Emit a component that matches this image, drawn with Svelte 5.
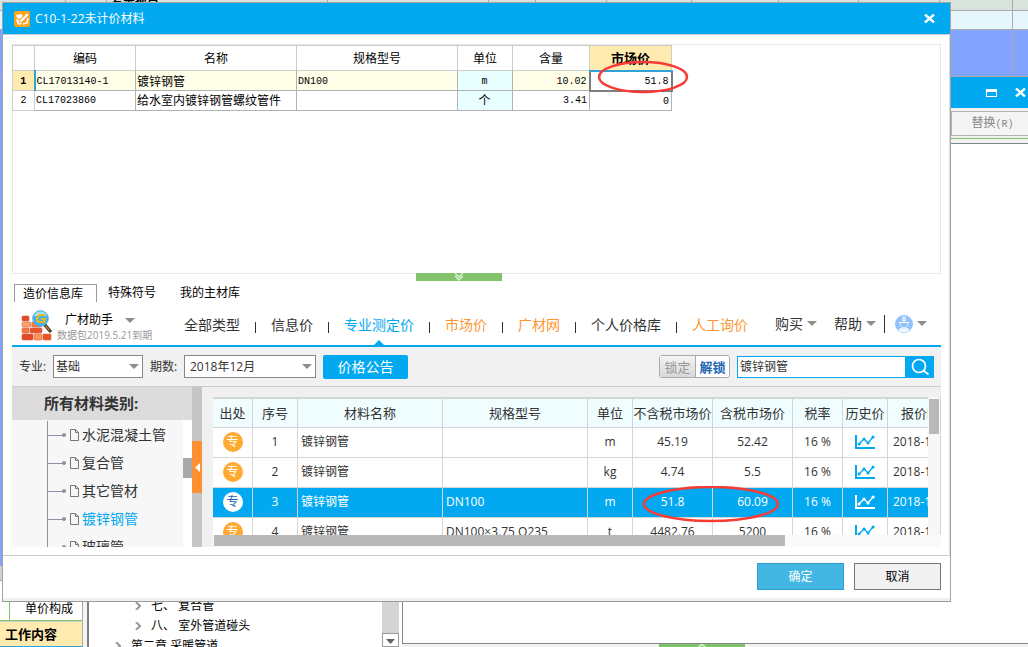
<script>
    let materials = [
        { code: 'CL17013140-1', name: '镀锌钢管', spec: 'DN100', unit: 'm', amount: '10.02', price: '51.8' },
        { code: 'CL17023860', name: '给水室内镀锌钢管螺纹管件', spec: '', unit: '个', amount: '3.41', price: '0' },
    ];

    let prices = [
        { name: '镀锌钢管', spec: '', unit: 'm', net: '45.19', gross: '52.42' },
        { name: '镀锌钢管', spec: '', unit: 'kg', net: '4.74', gross: '5.5' },
        { name: '镀锌钢管', spec: 'DN100', unit: 'm', net: '51.8', gross: '60.09' },
        { name: '镀锌钢管', spec: 'DN100×3.75 Q235', unit: 't', net: '4482.76', gross: '5200' },
    ];

    const navItems = [
        { label: '全部类型' },
        { label: '信息价' },
        { label: '专业测定价', active: true },
        { label: '市场价', hot: true },
        { label: '广材网', hot: true },
        { label: '个人价格库' },
        { label: '人工询价', hot: true },
    ];

    const categories = ['水泥混凝土管', '复合管', '其它管材', '镀锌钢管', '玻璃管'];
    const sheetColumns = [161, 47, 71, 85, 87, 80, 81, 73, 16];

    let selected = 2;
    let category = '镀锌钢管';
    let keyword = '镀锌钢管';
</script>

<div class="desktop">
    <div class="sheet">
        <div class="sheet-head">
            <i class="sheet-no"></i>
            <span>复杂项目</span>
            {#each sheetColumns as width}
                <i style="width: {width}px"></i>
            {/each}
        </div>
        <div class="sheet-row light"><i></i></div>
        <div class="sheet-row blue"><i></i></div>
    </div>
    <div class="left-pane">
        <div class="strip"></div>
        <div class="strip-end"></div>
        <div class="bottom-pane">
            <div class="cost">
                <div class="cost-tab">单价构成</div>
                <div class="cost-title">工作内容</div>
            </div>
            <ul class="chapters">
                <li><svg width="6" height="8" viewBox="0 0 6 8"><path d="M1 0l4 4-4 4" /></svg>七、 复合管</li>
                <li><svg width="6" height="8" viewBox="0 0 6 8"><path d="M1 0l4 4-4 4" /></svg>八、 室外管道碰头</li>
                <li class="outer"><svg width="6" height="8" viewBox="0 0 6 8"><path d="M1 0l4 4-4 4" /></svg>第二章 采暖管道</li>
            </ul>
            <div class="chapter-scroll">
                <button aria-label="向下"><svg width="9" height="5" viewBox="0 0 9 5"><path d="M0 0h9L4.500 5z" fill="#5b6270" /></svg></button>
            </div>
        </div>
    </div>
    <div class="back-window">
        <div class="back-title">
            <button aria-label="最大化"><svg width="11" height="8" viewBox="0 0 11 8"><path d="M0 0h11v8H0zM1 3v4h9V3z" fill="#fff" fill-rule="evenodd" /></svg></button>
            <button aria-label="关闭窗口"><svg width="11" height="9" viewBox="0 0 11 9"><path d="M1 .5l9 8M10 .5l-9 8" stroke="#fff" stroke-width="2.400" /></svg></button>
        </div>
        <div class="back-tools"><button disabled>替换<span class="mono">(R)</span></button></div>
        <div class="back-body"></div>
        <div class="back-foot"><div><svg width="10" height="4" viewBox="0 0 10 4"><path d="M1 4l4-4 4 4" stroke="#d9efd2" stroke-width="1.500" fill="none" /></svg></div></div>
    </div>

    <section class="dialog" role="dialog" aria-labelledby="dialog-title">
        <header class="title-bar">
            <svg width="16" height="16" viewBox="0 0 16 16">
                <rect width="16" height="16" rx="2" fill="#ffa21c" />
                <path d="M2 4l5-1 2 2-3 3-3-1zM2 8l3 1 1 2 1-1 1 3-3 1-2-2z" fill="#fff" />
                <path d="M6 9l7-7 2 2-7 7-3 1z" fill="#fff" stroke="#f29a20" stroke-width=".7" />
                <path d="M9 13l4-1 1-5" fill="none" stroke="#fff" stroke-width="1.500" />
            </svg>
            <h1 id="dialog-title">C10-1-22未计价材料</h1>
            <button class="close" aria-label="关闭"><svg width="11" height="9" viewBox="0 0 11 9"><path d="M1 .5l9 8M10 .5l-9 8" stroke="#fff" stroke-width="2.400" /></svg></button>
        </header>

        <div class="content">
            <div class="material-panel">
                <table class="materials">
                    <colgroup><col class="m-no" /><col class="m-code" /><col class="m-wide" /><col class="m-wide" /><col class="m-unit" /><col class="m-amount" /><col class="m-price" /></colgroup>
                    <thead>
                        <tr><th></th><th>编码</th><th>名称</th><th>规格型号</th><th>单位</th><th>含量</th><th class="focus">市场价</th></tr>
                    </thead>
                    <tbody>
                        {#each materials as item, i}
                            <tr class:current={i === 0}>
                                <th class="mono">{i + 1}</th>
                                <td class="mono">{item.code}</td>
                                <td>{item.name}</td>
                                <td class="mono">{item.spec}</td>
                                <td class="unit" class:mono={i === 0}>{item.unit}</td>
                                <td class="mono num">{item.amount}</td>
                                <td class="mono num price">
                                    {item.price}
                                    {#if i === 0}
                                        <svg class="ring small" width="92" height="34" viewBox="0 0 92 34"><ellipse cx="46" cy="17" rx="44" ry="15" /></svg>
                                    {/if}
                                </td>
                            </tr>
                        {/each}
                    </tbody>
                </table>
            </div>
            <button class="grip" aria-label="收起">
                <svg width="10" height="8" viewBox="0 0 10 8"><path d="M1 0l4 4 4-4M1 3l4 4 4-4" stroke="#e4f4df" stroke-width="1.300" fill="none" /></svg>
            </button>

            <div class="tabs">
                <button class="on">造价信息库</button>
                <button>特殊符号</button>
                <button>我的主材库</button>
            </div>

            <div class="helper">
                <svg class="logo" width="31" height="31" viewBox="0 0 31 31">
                    <g fill="#f17a45" stroke="#d9603c" stroke-width=".6">
                        <rect x="1" y="6" width="7" height="5" rx="1" fill="#e34a25" />
                        <rect x="1" y="12" width="9" height="5" rx="1" fill="#ffa36b" /><rect x="11" y="12" width="9" height="5" rx="1" />
                        <rect x="1" y="18" width="7" height="5" rx="1" /><rect x="9" y="18" width="12" height="5" rx="1" fill="#e9552b" />
                        <rect x="1" y="24" width="11" height="6" rx="1" fill="#e34a25" /><rect x="13" y="24" width="8" height="6" rx="1" fill="#ff965c" /><rect x="22" y="24" width="8" height="6" rx="1" fill="#ea5527" />
                    </g>
                    <path d="M24 15l5 6" stroke="#5d4527" stroke-width="3.500" stroke-linecap="round" />
                    <path d="M25 16l3 4" stroke="#d4a34b" stroke-width="1" />
                    <circle cx="19.500" cy="8.500" r="7.800" fill="#42b3ed" stroke="#5aa9d6" />
                    <path d="M13 6a7 7 0 0 1 13 0" fill="#a5e2ff" />
                    <path d="M24 5h-5q-3 1-3 4 0 3 3 3h4l1-3h-4" fill="none" stroke="#e8b81c" stroke-width="2" />
                </svg>
                <div class="product">
                    <button>广材助手 <i class="caret"></i></button>
                    <small>数据包2019.5.21到期</small>
                </div>
                <nav>
                    {#each navItems as item, i}
                        {#if i}<i class="sep"></i>{/if}
                        <a href="#{i}" class:active={item.active} class:hot={item.hot}>{item.label}</a>
                    {/each}
                </nav>
                <div class="account">
                    <button>购买 <i class="caret"></i></button>
                    <button>帮助 <i class="caret"></i></button>
                    <i class="divider"></i>
                    <button class="user" aria-label="账户">
                        <svg width="18" height="18" viewBox="0 0 18 18">
                            <circle cx="9" cy="9" r="9" fill="#8fc3fa" />
                            <path d="M3 15q1-2 4-2v-1h4v1q3 0 4 2-6 5-12 0z" fill="#eef6ff" />
                            <path d="M4 7.500h10M8 1.500v4h2v-4" stroke="#fff" stroke-width="1.200" fill="none" />
                            <path d="M5 8q0 5 4 5t4-5" fill="none" stroke="#d9ebff" />
                        </svg>
                        <i class="caret"></i>
                    </button>
                </div>
            </div>

            <div class="filters">
                <label for="major">专业:</label>
                <span class="select major"><select id="major"><option>基础</option></select><i class="caret"></i></span>
                <label for="period">期数:</label>
                <span class="select period"><select id="period"><option>2018年12月</option></select><i class="caret"></i></span>
                <button class="notice">价格公告</button>
                <div class="lock"><button disabled>锁定</button><button>解锁</button></div>
                <form class="search" on:submit|preventDefault>
                    <input aria-label="搜索材料" bind:value={keyword} />
                    <button aria-label="搜索"><svg width="20" height="18" viewBox="0 0 20 18"><circle cx="9" cy="8" r="6.500" fill="none" stroke="#fff" stroke-width="1.700" /><path d="M13.500 12.500l5 4" stroke="#fff" stroke-width="1.700" /></svg></button>
                </form>
            </div>

            <div class="workspace">
                <aside>
                    <h2>所有材料类别:</h2>
                    <div class="tree-box">
                        <ul class="tree">
                            {#each categories as item}
                                <li>
                                    <i class="branch"></i>
                                    <button class:picked={item === category} on:click={() => category = item}>
                                        <svg width="9" height="12" viewBox="0 0 9 12"><path d="M.5.5h5l3 3v8h-8zM5.500.5v3h3" fill="none" stroke="#777" /></svg>{item}
                                    </button>
                                </li>
                            {/each}
                        </ul>
                        <div class="tree-scroll"><i></i></div>
                    </div>
                </aside>
                <div class="splitter"><button aria-label="收起类别"><svg width="5" height="9" viewBox="0 0 5 9"><path d="M5 0v9L0 4.500z" fill="#fff" /></svg></button></div>
                <div class="grid">
                    <div class="grid-view">
                        <table class="prices">
                            <colgroup><col class="p-src" /><col class="p-no" /><col class="p-wide" /><col class="p-wide" /><col class="p-no" /><col class="p-price" /><col class="p-price" /><col class="p-tax" /><col class="p-no" /><col class="p-date" /></colgroup>
                            <thead>
                                <tr><th>出处</th><th>序号</th><th>材料名称</th><th>规格型号</th><th>单位</th><th>不含税市场价</th><th>含税市场价</th><th>税率</th><th>历史价</th><th>报价时间</th></tr>
                            </thead>
                            <tbody>
                                {#each prices as row, i}
                                    <tr class:selected={i === selected} on:click={() => selected = i}>
                                        <td><span class="badge">专</span></td>
                                        <td>{i + 1}</td>
                                        <td class="text">{row.name}</td>
                                        <td class="text">{row.spec}</td>
                                        <td>{row.unit}</td>
                                        <td class="net">
                                            {row.net}
                                            {#if i === 2}
                                                <svg class="ring large" width="137" height="37" viewBox="0 0 137 37"><ellipse cx="68" cy="18" rx="67" ry="17" /></svg>
                                            {/if}
                                        </td>
                                        <td>{row.gross}</td>
                                        <td>16 %</td>
                                        <td><svg class="chart" width="20" height="15" viewBox="0 0 20 15"><path d="M1 0v13h19" stroke-width="2" /><path d="M4 9l5-5 4 4 5-6" stroke-width="1.300" /><path d="M4 9h.1M9 4h.1M13 8h.1M18 2h.1" stroke-width="3" stroke-linecap="round" /></svg></td>
                                        <td>2018-12-05</td>
                                    </tr>
                                {/each}
                            </tbody>
                        </table>
                    </div>
                    <div class="v-scroll"><i></i></div>
                    <div class="h-scroll"><i></i></div>
                </div>
            </div>
        </div>

        <footer>
            <button class="ok">确定</button>
            <button class="cancel">取消</button>
        </footer>
    </section>
</div>

<style>
    * {
        box-sizing: border-box;
    }

    .desktop {
        position: relative;
        display: grid;
        grid-template-columns: 402px 1fr;
        grid-template-rows: 77px 1fr;
        height: 100vh;
        overflow: hidden;
        background: #fff;
        color: #000;
        font: 12px/16px "Liberation Sans", "Noto Sans CJK SC", sans-serif;
    }
    button, input, select {
        margin: 0;
        padding: 0;
        border: 0;
        border-radius: 0;
        background: none;
        color: inherit;
        font: inherit;
    }
    button {
        cursor: pointer;
    }
    ul, h1, h2 {
        margin: 0;
        padding: 0;
        list-style: none;
    }
    svg {
        flex: none;
    }
    a {
        color: inherit;
        text-decoration: none;
    }
    .mono {
        font-family: "Liberation Mono", "Noto Sans CJK SC", monospace;
        font-size: 10px;
    }
    .caret {
        flex: none;
        border: 5px solid transparent;
        border-top-color: #8d8d8d;
        border-bottom: 0;
    }

    /* windows behind the dialog */
    .sheet {
        grid-column: 1 / 3;
        display: flex;
        flex-direction: column;
    }
    .sheet-head, .sheet-row {
        display: flex;
        justify-content: flex-end;
        border-bottom: 1px solid #aaa;
    }
    .sheet-head {
        height: 11px;
        background: #d9e3de;
        font-size: 12px;
        font-weight: bold;
        line-height: 1px;
    }
    .sheet-head span {
        flex: 1;
        padding-left: 4px;
        border-left: 1px solid #aaa;
        line-height: 0;
    }
    .sheet i {
        width: 16px;
        border-left: 1px solid #aaa;
    }
    .sheet .sheet-no {
        width: 41px;
        margin-left: 65px;
    }
    .light {
        height: 19px;
        background: #e5f7fc;
    }
    .blue {
        flex: 1;
        background: #82a4fe;
    }
    .left-pane {
        display: flex;
        flex-direction: column;
    }
    .strip {
        flex: 1;
        background: #82a4fe;
    }
    .strip-end {
        height: 14px;
        background: #d0d0d0;
    }
    .bottom-pane {
        display: flex;
        height: 67px;
        overflow: hidden;
    }
    .cost {
        width: 89px;
        border-right: 2px solid #807e84;
        background: #f4f4f4;
    }
    .cost > div {
        width: 83px;
        border-right: 1px solid #aaa;
    }
    .cost-tab {
        height: 41px;
        padding: 20px 0 0 25px;
        border-top: 1px solid #80c36b;
        border-bottom: 1px solid #80c36b;
        background: linear-gradient(#80c36b, #80c36b) 9px 0 / 1px 100% no-repeat #fff;
    }
    .cost-title {
        height: 26px;
        padding: 5px;
        border-top: 1px solid #ccc;
        border-bottom: 1px solid #32a2d5;
        background: #ffebb0;
        font-size: 13px;
        font-weight: bold;
    }
    .chapters {
        flex: 1;
        padding-top: 16px;
    }
    .chapters li {
        display: flex;
        align-items: center;
        gap: 10px;
        height: 20px;
        padding-left: 46px;
        white-space: pre;
    }
    .chapters .outer {
        padding-left: 26px;
    }
    .chapters path {
        fill: none;
        stroke: #999;
        stroke-width: 2;
    }
    .chapter-scroll {
        display: flex;
        align-items: flex-end;
        width: 17px;
        margin-right: 3px;
        background: #d4d4d4;
    }
    .chapter-scroll button {
        width: 17px;
        height: 14px;
        border: 1px solid #999;
        background: #fff;
        line-height: 10px;
    }
    .back-window {
        display: flex;
        flex-direction: column;
        background: #f2f2f2;
    }
    .back-title {
        display: flex;
        align-items: center;
        justify-content: flex-end;
        gap: 18px;
        height: 31px;
        padding-right: 2px;
        background: #02a9f1;
    }
    .back-title button, .close {
        display: flex;
    }
    .back-tools {
        display: flex;
        justify-content: flex-end;
        height: 31px;
        padding-top: 3px;
        border-bottom: 1px solid #80c36b;
    }
    .back-tools button {
        width: 77px;
        height: 25px;
        padding-left: 5px;
        border: 1px solid #b3b3b3;
        border-right: 0;
        background: #f4f4f4;
        color: #888;
    }
    .back-body {
        flex: 1;
        margin-top: 4px;
        border: 1px solid #7f8790;
        border-right: 0;
        background: #fff;
    }
    .back-foot {
        height: 3px;
        padding-left: 257px;
    }
    .back-foot div {
        display: flex;
        justify-content: center;
        width: 86px;
        height: 3px;
        background: #80c36b;
    }

    .dialog {
        position: absolute;
        top: 2px;
        left: 2px;
        right: 77px;
        border: 1px solid #a3a3a3;
        border-bottom-color: #999;
        background: #fff;
    }
    .title-bar {
        display: flex;
        align-items: center;
        height: 32px;
        padding: 0 15px 0 11px;
        border-bottom: 1px solid #ccc;
        background: #02a9f1;
        color: #fff;
    }
    h1 {
        flex: 1;
        margin-left: 5px;
        font: 12px/16px "Open Sans", "Noto Sans CJK SC", sans-serif;
    }
    .content {
        padding: 9px 8px 8px 9px;
        border-right: 1px solid #ddd;
        border-bottom: 1px solid #ccc;
    }
    .material-panel {
        height: 230px;
        border: 1px solid #e8e8e8;
    }

    table {
        margin-left: -1px;
        border-collapse: collapse;
        table-layout: fixed;
    }
    .materials {
        width: 660px;
    }
    .m-no { width: 22px; }
    .m-code { width: 101px; }
    .m-wide { width: 161px; }
    .m-unit { width: 55px; }
    .m-amount { width: 77px; }
    .m-price { width: 82px; }
    .materials th, .materials td {
        height: 19px;
        padding: 2px 2px 0;
        border: 1px solid #b2b2b2;
        line-height: 16px;
        text-align: left;
        white-space: nowrap;
    }
    .materials td {
        padding-left: 1px;
    }
    .materials th {
        border-color: #ccc;
        font-weight: normal;
        text-align: center;
    }
    .materials thead th {
        height: 25px;
    }
    .materials .focus {
        border-bottom: 2px solid #32a2d5;
        background: #ffebb0;
        font-size: 13px;
        font-weight: bold;
    }
    .materials .current td {
        background: #ffffe9;
    }
    .materials .current th {
        border-right: 2px solid #32a2d5;
        background: #ffebb0;
        font-weight: bold;
    }
    .materials tbody .unit {
        background: #e9fefe;
        text-align: center;
    }
    .materials .num {
        text-align: right;
    }
    .materials .price {
        position: relative;
    }
    .materials .current .price {
        border: 2px solid #7d7d7d;
        border-top: 0;
        background: #fff;
    }
    .ring {
        position: absolute;
        z-index: 1;
        fill: none;
        stroke: #f93a35;
        stroke-width: 2.500;
        pointer-events: none;
    }
    .small {
        top: -12px;
        left: 6px;
    }
    .large {
        top: -2px;
        left: 10px;
    }
    .grip {
        display: flex;
        justify-content: center;
        width: 86px;
        height: 8px;
        margin: -1px 0 0 404px;
        background: #80c36b;
    }

    .tabs {
        display: flex;
        height: 18px;
        margin-top: 3px;
        padding-left: 2px;
    }
    .tabs button {
        height: 18px;
        margin-right: 14px;
        padding: 0 5px;
    }
    .tabs .on {
        margin-right: 6px;
        padding: 0 13px 0 8px;
        border: 1px solid #999;
        border-bottom: 0;
    }

    .helper, .filters, .workspace {
        color: #333;
        font-family: "Open Sans", "Noto Sans CJK SC", sans-serif;
    }
    .helper {
        display: flex;
        height: 45px;
        padding-right: 14px;
        border-bottom: 2px solid #02a9f1;
        font-size: 14px;
        line-height: 20px;
        white-space: nowrap;
    }
    .logo {
        margin: 8px 5px 0 9px;
    }
    .product {
        display: flex;
        flex-direction: column;
        width: 127px;
        padding-top: 10px;
    }
    .product button {
        display: flex;
        align-items: center;
        gap: 12px;
        height: 16px;
        padding-left: 8px;
        color: #000;
        font-size: 12px;
        line-height: 16px;
    }
    .product small {
        color: #999;
        font-size: 10px;
        line-height: 15px;
    }
    nav {
        display: flex;
        align-items: center;
        gap: 15px;
    }
    nav a {
        position: relative;
        height: 43px;
        padding-top: 13px;
    }
    .sep {
        width: 1px;
        height: 11px;
        margin-top: 8px;
        background: #333;
    }
    .hot {
        color: #fe9732;
    }
    .active {
        color: #02a9f1;
    }
    .active::after {
        content: "";
        position: absolute;
        bottom: 0;
        left: 50%;
        margin-left: -5px;
        border: 5px solid transparent;
        border-top: 0;
        border-bottom-color: #02a9f1;
    }
    .account {
        display: flex;
        align-items: center;
        margin-left: auto;
    }
    .account button {
        display: flex;
        align-items: center;
        gap: 4px;
        margin-right: 17px;
    }
    .account button + button {
        margin-right: 8px;
    }
    .divider {
        width: 1px;
        height: 18px;
        background: #333;
    }
    .account .user {
        margin: 0 0 0 10px;
    }

    .filters {
        display: flex;
        align-items: center;
        height: 40px;
        padding: 0 7px;
        border-bottom: 1px solid #ccc;
        background: #f1f1f1;
        line-height: 18px;
    }
    .filters label {
        width: 34px;
    }
    .select {
        position: relative;
        margin-right: 7px;
    }
    .select select {
        width: 100%;
        height: 23px;
        padding-left: 2px;
        border: 1px solid #888;
        background: #fff;
        appearance: none;
    }
    .select .caret {
        position: absolute;
        top: 9px;
        right: 4px;
    }
    .major {
        width: 90px;
    }
    .period {
        width: 132px;
    }
    .period select {
        padding-left: 5px;
    }
    .notice {
        width: 85px;
        height: 24px;
        border-radius: 2px;
        background: #02a9f1;
        color: #fff;
        font-size: 14px;
    }
    .lock {
        display: flex;
        height: 23px;
        margin-left: auto;
        border: 1px solid #aaa;
        border-radius: 3px;
        font-size: 13px;
    }
    .lock button {
        width: 35px;
        background: linear-gradient(#f4f4f4, #d8d8d8);
        color: #999;
    }
    .lock button + button {
        width: 34px;
        border-left: 1px solid #aaa;
        border-radius: 0 2px 2px 0;
        background: #fff;
        color: #1e66b4;
        font-weight: bold;
    }
    .search {
        display: flex;
        width: 197px;
        height: 22px;
        margin-left: 7px;
    }
    .search input {
        flex: 1;
        min-width: 0;
        padding: 0 2px;
        border: 1px solid #02a9f1;
        background: #fff;
    }
    .search button {
        display: flex;
        align-items: center;
        justify-content: center;
        width: 28px;
        background: #02a9f1;
    }

    .workspace {
        display: flex;
        height: 160px;
    }
    aside {
        display: flex;
        flex: none;
        flex-direction: column;
        width: 180px;
    }
    h2 {
        height: 33px;
        padding-left: 32px;
        background: #dcdcdc;
        font-size: 15px;
        line-height: 33px;
    }
    .tree-box {
        display: flex;
        flex: 1;
        overflow: hidden;
        background: #fff;
    }
    .tree {
        width: 171px;
        padding: 1px 0 0 35px;
        background: #f7f7f7;
    }
    .tree li {
        display: flex;
        align-items: center;
        height: 28px;
        border-left: 1px solid #8d91a0;
    }
    .branch {
        display: flex;
        align-items: center;
        justify-content: flex-end;
        width: 18px;
        height: 1px;
        background: #8d91a0;
    }
    .branch::after {
        content: "";
        width: 4px;
        height: 4px;
        border-radius: 2px;
        background: #8d91a0;
    }
    .tree button {
        display: flex;
        align-items: center;
        gap: 3px;
        margin-left: 4px;
        font-size: 14px;
        line-height: 20px;
        white-space: nowrap;
    }
    .tree .picked {
        color: #02a9f1;
    }
    .tree-scroll {
        flex: 1;
        padding-top: 38px;
    }
    .tree-scroll i {
        display: block;
        height: 20px;
        background: #a9a9a9;
    }
    .splitter {
        flex: none;
        width: 10px;
        padding-top: 54px;
        background: #c8c6c5;
    }
    .splitter button {
        display: flex;
        align-items: center;
        justify-content: center;
        width: 10px;
        height: 52px;
        background: #ff9031;
    }
    .grid {
        display: grid;
        flex: 1;
        grid-template-columns: 1fr 13px;
        grid-template-rows: 138px 12px;
        min-width: 0;
        padding: 10px 0 0 11px;
        background: #f0f0f0;
    }
    .grid-view {
        overflow: hidden;
        background: #fff;
    }
    .prices {
        width: 770px;
        font-size: 12px;
    }
    .p-src { width: 40px; }
    .p-no { width: 45px; }
    .p-wide { width: 145px; }
    .p-price { width: 80px; }
    .p-tax { width: 50px; }
    .p-date { width: 95px; }
    .prices th, .prices td {
        height: 30px;
        padding: 0;
        border: 1px solid #d3d6d6;
        line-height: 18px;
        text-align: center;
        white-space: nowrap;
    }
    .prices th {
        height: 29px;
        border-top-width: 2px;
        background: #f0fdff;
        font-size: 13px;
        font-weight: normal;
    }
    .prices .text {
        padding-left: 3px;
        text-align: left;
    }
    .prices td:last-child {
        padding-left: 5px;
        text-align: left;
    }
    .prices th:last-child {
        padding-left: 13px;
        text-align: left;
    }
    .selected td {
        background: #02a9f1;
        color: #fff;
    }
    .net {
        position: relative;
    }
    .badge {
        display: block;
        width: 20px;
        height: 20px;
        margin: 0 auto;
        border-radius: 50%;
        background: #ffab31;
        color: #fff;
        line-height: 20px;
    }
    .selected .badge {
        background: #fff;
        color: #1e66b4;
    }
    .chart {
        display: block;
        margin: 0 auto;
        fill: none;
        stroke: #02a9f1;
    }
    .selected .chart {
        stroke: #fff;
    }
    .v-scroll {
        padding: 2px 1px;
        border-right: 1px solid #d3d6d6;
        background: #f7f7f7;
    }
    .v-scroll i {
        display: block;
        height: 35px;
        background: #b9b9b9;
    }
    .h-scroll {
        grid-column: 1 / 3;
        padding: 0 13px 1px 1px;
        background: #fafafa;
    }
    .h-scroll i {
        display: block;
        width: 80%;
        height: 11px;
        background: #b9b9b9;
    }

    footer {
        display: flex;
        justify-content: flex-end;
        gap: 10px;
        padding: 7px 9px 8px;
        border-bottom: 3px solid #f0f0f0;
    }
    footer button {
        width: 87px;
        height: 27px;
        padding-top: 1px;
        border: 1px solid #777;
        background: #f1f1f1;
    }
    footer .ok {
        border-color: #2d9fcb;
        background: #43b6e4;
        color: #fff;
    }
</style>
